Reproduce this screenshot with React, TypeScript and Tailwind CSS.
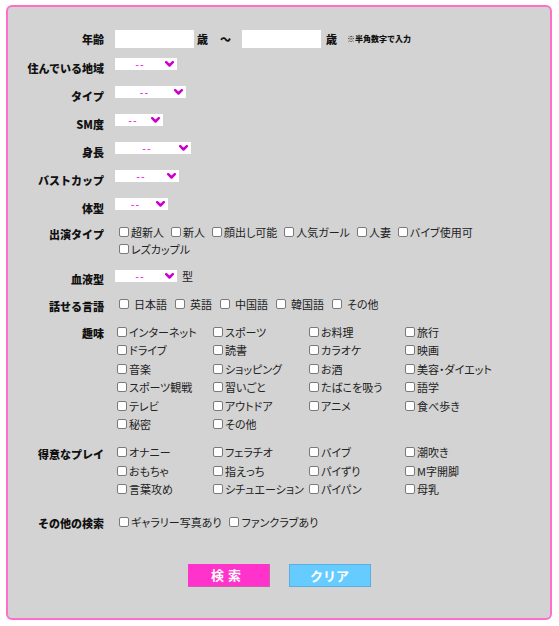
import React from 'react';

const font = "font-['Noto_Sans_CJK_JP','Noto_Sans',sans-serif]";

function Chevron() {
  return (
    <svg width="9" height="6" viewBox="0 0 9 6" className="mr-[3px] shrink-0">
      <path d="M1.2 1.2 L4.5 4.5 L7.8 1.2" fill="none" stroke="#cc00cc" strokeWidth="2.5" strokeLinecap="round" strokeLinejoin="round" />
    </svg>
  );
}

function FakeSelect({ width }: { width: string }) {
  return (
    <div className={`flex items-center h-[12px] bg-white ${width}`}>
      <span className="flex-1 text-center font-['Liberation_Sans',sans-serif] text-[11px] leading-[12px] tracking-[1px] text-[#ee22ee]">--</span>
      <Chevron />
    </div>
  );
}

function Box() {
  return <span className="inline-block w-[10px] h-[10px] shrink-0 bg-white border border-[#7a7a7a] rounded-[2px]" />;
}

function Check({ text, gap = 'mr-[2px]' }: { text: string; gap?: string }) {
  return (
    <label className="inline-flex items-center whitespace-nowrap">
      <span className={gap}>
        <Box />
      </span>
      <span className="[font-feature-settings:'palt']">{text}</span>
    </label>
  );
}

function Label({ children, extra = '' }: { children: React.ReactNode; extra?: string }) {
  return (
    <div className={`w-[96px] shrink-0 text-right text-[11px] font-black text-[#111] ${extra}`}>
      {children}
    </div>
  );
}

const selectRows = [
  { label: '住んでいる地域', width: 'w-[62px]' },
  { label: 'タイプ', width: 'w-[71px]' },
  { label: 'SM度', width: 'w-[48px]' },
  { label: '身長', width: 'w-[76px]' },
  { label: 'バストカップ', width: 'w-[64px]' },
  { label: '体型', width: 'w-[53px]' },
];

const castTypes = ['超新人', '新人', '顔出し可能', '人気ガール', '人妻', 'バイブ使用可', 'レズカップル'];
const languages = ['日本語', '英語', '中国語', '韓国語', 'その他'];
const hobbies = [
  'インターネット', 'スポーツ', 'お料理', '旅行',
  'ドライブ', '読書', 'カラオケ', '映画',
  '音楽', 'ショッピング', 'お酒', '美容・ダイエット',
  'スポーツ観戦', '習いごと', 'たばこを吸う', '語学',
  'テレビ', 'アウトドア', 'アニメ', '食べ歩き',
  '秘密', 'その他',
];
const plays = [
  'オナニー', 'フェラチオ', 'バイブ', '潮吹き',
  'おもちゃ', '指えっち', 'パイずり', 'M字開脚',
  '言葉攻め', 'シチュエーション', 'パイパン', '母乳',
];

export default function App() {
  return (
    <div className={`w-[559px] h-[626px] bg-white pt-[5px] pl-[6px] ${font}`}>
      <div className="w-[546px] h-[615px] bg-[#d3d3d3] border-2 border-[#ff6ec8] rounded-[6px] pt-[21px] pb-[32px]">
        {/* 年齢 */}
        <div className="flex items-center h-[22px]">
          <Label>年齢</Label>
          <div className="flex items-center ml-[11px] text-[11px] font-black text-[#111]">
            <div className="w-[79px] h-[18px] bg-white" />
            <span className="ml-[3px]">歳</span>
            <span className="ml-[12px] mr-[11px]">～</span>
            <div className="w-[79px] h-[18px] bg-white" />
            <span className="ml-[5px]">歳</span>
            <span className="ml-[10px] text-[8px]">※半角数字で入力</span>
          </div>
        </div>

        {selectRows.map((row) => (
          <div key={row.label} className="flex items-center h-[28px]">
            <Label extra="pt-[8px]">{row.label}</Label>
            <div className="ml-[11px]">
              <FakeSelect width={row.width} />
            </div>
          </div>
        ))}

        {/* 出演タイプ */}
        <div className="flex items-start pt-[6px]">
          <Label extra="leading-[17px] pt-[2px]">出演タイプ</Label>
          <div className="ml-[15px] w-[360px] flex flex-wrap gap-x-[7px] text-[11px] leading-[17px] text-[#222]">
            {castTypes.map((t) => (
              <Check key={t} text={t} />
            ))}
          </div>
        </div>

        {/* 血液型 */}
        <div className="flex items-center h-[28px] mt-[4px]">
          <Label extra="pt-[6px]">血液型</Label>
          <div className="ml-[11px] flex items-center">
            <FakeSelect width="w-[62px]" />
            <span className="ml-[5px] text-[11px] text-[#222]">型</span>
          </div>
        </div>

        {/* 話せる言語 */}
        <div className="flex items-center h-[28px]">
          <Label extra="pt-[4px]">話せる言語</Label>
          <div className="ml-[15px] flex gap-x-[8px] text-[11px] text-[#222]">
            {languages.map((t) => (
              <Check key={t} text={t} gap="mr-[5px]" />
            ))}
          </div>
        </div>

        {/* 趣味 */}
        <div className="flex items-start mt-[5px]">
          <Label extra="leading-[18.4px] pt-[1px]">趣味</Label>
          <div className="ml-[13px] grid grid-cols-[96px_96px_96px_96px] text-[11px] leading-[18.4px] text-[#222]">
            {hobbies.map((t) => (
              <Check key={t} text={t} />
            ))}
          </div>
        </div>

        {/* 得意なプレイ */}
        <div className="flex items-start mt-[10px]">
          <Label extra="leading-[18.4px] pt-[2px]">得意なプレイ</Label>
          <div className="ml-[13px] grid grid-cols-[96px_96px_96px_96px] text-[11px] leading-[18.4px] text-[#222]">
            {plays.map((t) => (
              <Check key={t} text={t} />
            ))}
          </div>
        </div>

        {/* その他の検索 */}
        <div className="flex items-start mt-[14px]">
          <Label extra="leading-[18.4px] pt-[1px]">その他の検索</Label>
          <div className="ml-[15px] flex gap-x-[8px] text-[11px] leading-[18.4px] text-[#222]">
            <Check text="ギャラリー写真あり" />
            <Check text="ファンクラブあり" />
          </div>
        </div>

        {/* buttons */}
        <div className="flex justify-center gap-[19px] mt-[32px]">
          <button className="w-[82px] h-[23px] bg-[#ff33cc] border-b border-r border-[#cc5fa8] text-white text-[13px] font-bold tracking-[4px]">
            検索
          </button>
          <button className="w-[82px] h-[23px] bg-[#66ccff] border border-[#5aaee0] text-white text-[13px] font-bold">
            クリア
          </button>
        </div>
      </div>
    </div>
  );
}
